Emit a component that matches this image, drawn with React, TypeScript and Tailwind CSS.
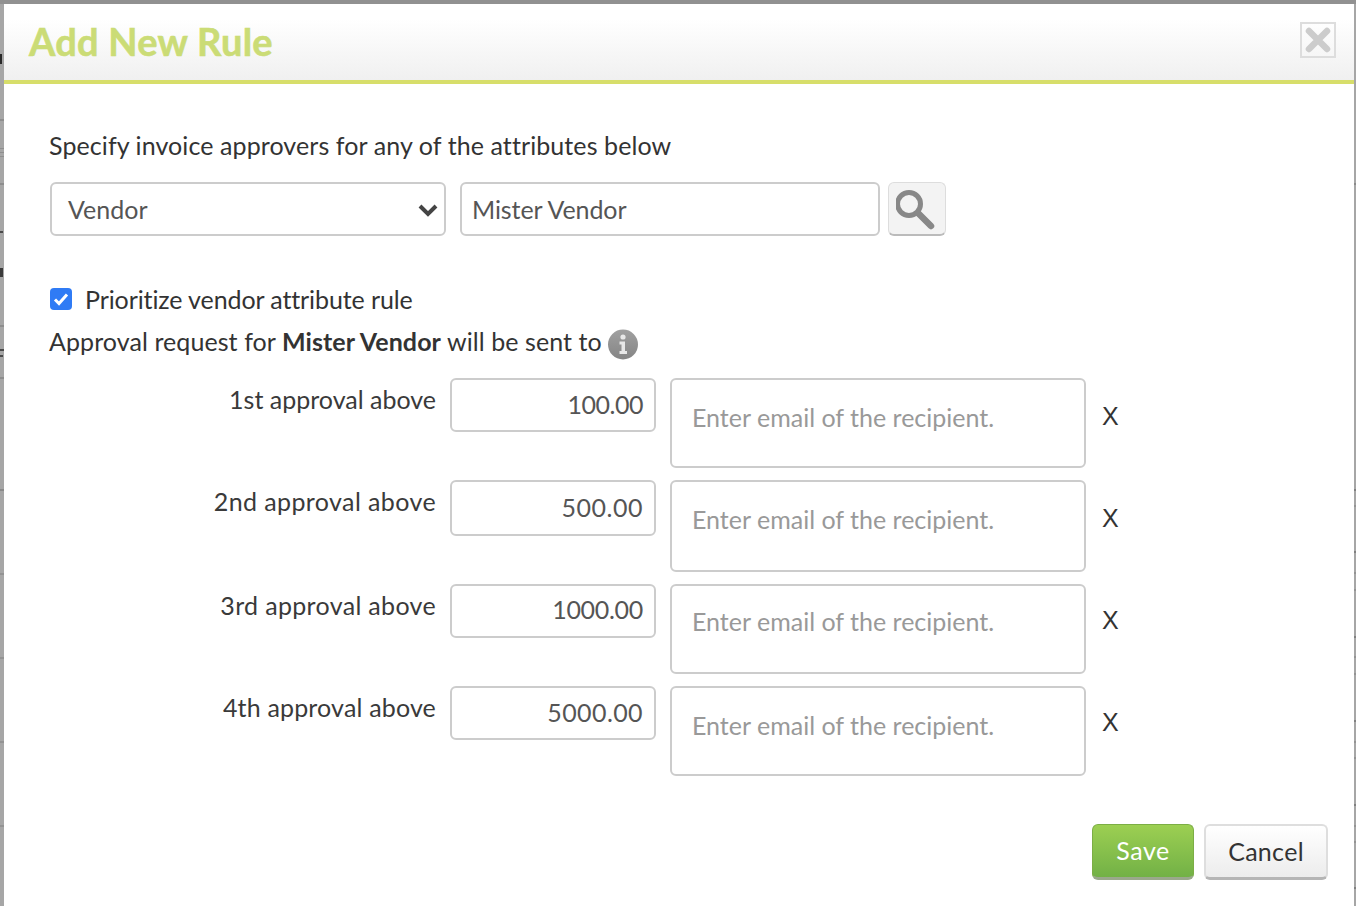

import React from "react";

const font = { fontFamily: '"Lato", "Liberation Sans", sans-serif' };

const rows = [
  { label: "1st approval above", value: "100.00", inputH: "h-[54px]", areaH: "h-[90px]", mb: "mb-[12px]", labelTrack: "tracking-normal", valueTrack: "tracking-[-0.5px]", valuePb: "pb-[1px]", areaPt: "pt-[22px]", xPt: "pt-[23px]" },
  { label: "2nd approval above", value: "500.00", inputH: "h-[56px]", areaH: "h-[92px]", mb: "mb-[12px]", labelTrack: "tracking-[0.4px]", valueTrack: "tracking-[0.5px]", valuePb: "pb-[1px]", areaPt: "pt-[22px]", xPt: "pt-[23px]" },
  { label: "3rd approval above", value: "1000.00", inputH: "h-[54px]", areaH: "h-[90px]", mb: "mb-[12px]", labelTrack: "tracking-[0.33px]", valueTrack: "tracking-[-0.3px]", valuePb: "pb-[3px]", areaPt: "pt-[20px]", xPt: "pt-[21px]" },
  { label: "4th approval above", value: "5000.00", inputH: "h-[54px]", areaH: "h-[90px]", mb: "mb-0", labelTrack: "tracking-[0.17px]", valueTrack: "tracking-[0.4px]", valuePb: "pb-0", areaPt: "pt-[22px]", xPt: "pt-[21px]" },
];

const leftMarks = [
  "top-[115px] h-[2px] w-[4px] bg-[#8e8e8e]",
  "top-[179px] h-[2px] w-[4px] bg-[#8e8e8e]",
  "top-[321px] h-[2px] w-[4px] bg-[#8e8e8e]",
  "top-[373px] h-[2px] w-[4px] bg-[#8e8e8e]",
  "top-[485px] h-[2px] w-[4px] bg-[#8a8a8a]",
  "top-[569px] h-[2px] w-[4px] bg-[#939393]",
  "top-[653px] h-[2px] w-[4px] bg-[#939393]",
  "top-[737px] h-[2px] w-[4px] bg-[#939393]",
  "top-[821px] h-[2px] w-[4px] bg-[#939393]",
  "top-[50px] h-[10px] w-[2px] bg-[#2a2a2a]",
  "top-[144px] h-[1px] w-[4px] bg-[#8f8f8f]",
  "top-[148px] h-[1px] w-[4px] bg-[#8f8f8f]",
  "top-[152px] h-[1px] w-[4px] bg-[#8f8f8f]",
  "top-[227px] h-[2px] w-[3px] bg-[#4a4a4a]",
  "top-[264px] h-[9px] w-[3px] bg-[#3a3a3a]",
  "top-[345px] h-[2px] w-[4px] bg-[#4a4a4a]",
  "top-[351px] h-[2px] w-[3px] bg-[#4a4a4a]",
];

const rightMarks = [
  "top-[179px] bg-[#8a8a8a]",
  "top-[485px] bg-[#808080]",
  "top-[501px] bg-[#939393]",
  "top-[547px] bg-[#808080]",
  "top-[568px] bg-[#939393]",
  "top-[585px] bg-[#939393]",
  "top-[632px] bg-[#808080]",
  "top-[652px] bg-[#939393]",
  "top-[669px] bg-[#939393]",
  "top-[716px] bg-[#808080]",
  "top-[737px] bg-[#939393]",
  "top-[753px] bg-[#939393]",
  "top-[800px] bg-[#808080]",
  "top-[821px] bg-[#939393]",
  "top-[837px] bg-[#939393]",
  "top-[883px] bg-[#808080]",
];

function Row({ r }: { r: (typeof rows)[number] }) {
  return (
    <div className={`flex items-start ${r.mb}`}>
      <div className={`w-[432px] pt-[6px] text-right text-[25px] leading-[30px] text-[#3a3a3a] ${r.labelTrack}`}>{r.label}</div>
      <div className={`ml-[14px] flex w-[206px] ${r.inputH} items-center justify-end rounded-[6px] border-2 border-[#cccccc] bg-white pr-[11px] text-[25px] text-[#555555] ${r.valuePb} ${r.valueTrack}`}>
        {r.value}
      </div>
      <div className={`ml-[14px] w-[416px] ${r.areaH} rounded-[6px] border-2 border-[#cccccc] bg-white pl-[20px] ${r.areaPt} text-[25px] leading-[30px] text-[#999999]`}>
        Enter email of the recipient.
      </div>
      <div className={`ml-[16px] ${r.xPt} text-[25px] leading-[30px] text-[#333333]`} style={{ fontFamily: '"Liberation Sans", sans-serif' }}>X</div>
    </div>
  );
}

export default function App() {
  return (
    <div className="flex h-[906px] w-[1356px] flex-col overflow-hidden bg-[#a3a3a3]" style={font}>
      <div className="h-[4px] shrink-0 bg-[#919191]" />
      <div className="flex min-h-0 flex-1">
        <div className="relative w-[4px] shrink-0 overflow-hidden bg-[#a6a6a6]">
          {leftMarks.map((m) => (
            <div key={m} className={`absolute left-0 ${m}`} />
          ))}
        </div>
        <div className="flex min-w-0 flex-1 flex-col bg-white">
          <div className="flex h-[80px] shrink-0 items-start justify-between border-b-4 border-[#d7de6a] bg-gradient-to-b from-white from-20% to-[#f0f0f0]">
            <div className="ml-[25px] mt-[14px] text-[38px] font-bold leading-[46px] tracking-[0.25px] text-[#cbdc76] [-webkit-text-stroke:0.6px_#cbdc76]">Add New Rule</div>
            <div className="mr-[18px] mt-[18px] flex h-[36px] w-[36px] items-center justify-center border-2 border-[#dddddd]">
              <svg className="blur-[0.5px]" width="28" height="28" viewBox="0 0 28 28">
                <path d="M5 5L23 23M23 5L5 23" stroke="#cccccc" strokeWidth="6.5" strokeLinecap="round" />
              </svg>
            </div>
          </div>

          <div className="flex min-h-0 flex-1 flex-col pl-[45px] pt-[45px]">
            <div className="text-[25px] leading-[32px] tracking-[0.09px] text-[#333333]">Specify invoice approvers for any of the attributes below</div>

            <div className="ml-px mt-[21px] flex items-stretch">
              <div className="flex h-[54px] w-[396px] items-center justify-between rounded-[6px] border-2 border-[#cccccc] bg-white pl-[16px] pr-[5px] pt-[1px] text-[25px] text-[#555555]">
                <span>Vendor</span>
                <svg width="22" height="14" viewBox="0 0 22 14">
                  <path d="M3 3L11 11L19 3" fill="none" stroke="#444444" strokeWidth="4" />
                </svg>
              </div>
              <div className="ml-[14px] flex h-[54px] w-[420px] items-center rounded-[6px] border-2 border-[#cccccc] bg-white pl-[10px] pt-[1px] text-[25px] tracking-[-0.08px] text-[#555555]">
                Mister Vendor
              </div>
              <div className="ml-[8px] flex h-[54px] w-[58px] items-center justify-center rounded-[6px] border border-[#dddddd] border-b-2 border-b-[#bbbbbb] bg-[#f3f3f3]">
                <svg className="blur-[0.4px]" width="42" height="42" viewBox="0 0 42 42">
                  <circle cx="13" cy="16" r="11.5" fill="none" stroke="#888888" strokeWidth="5" />
                  <path d="M22 25L35 38" stroke="#888888" strokeWidth="6.5" strokeLinecap="round" />
                </svg>
              </div>
            </div>

            <div className="ml-px mt-[52px] flex h-[22px] items-center">
              <div className="flex h-[22px] w-[22px] items-center justify-center rounded-[4px] bg-[#2f7bf5]">
                <svg width="16" height="14" viewBox="0 0 16 14">
                  <path d="M2 7.5L6 11.5L14 2.5" fill="none" stroke="white" strokeWidth="3" />
                </svg>
              </div>
              <span className="ml-[13px] text-[25px] leading-[30px] tracking-[-0.1px] text-[#333333]">Prioritize vendor attribute rule</span>
            </div>

            <div className="mt-[16px] flex h-[32px] items-center text-[25px] tracking-[0.08px] text-[#333333]">
              <span>
                Approval request for <b>Mister Vendor</b> will be sent to
              </span>
              <svg className="ml-[6px] mt-[4px]" width="30" height="31" viewBox="0 0 30 31">
                <defs>
                  <linearGradient id="infoFill" x1="0" y1="0" x2="0" y2="1">
                    <stop offset="0" stopColor="#a0a0a0" />
                    <stop offset="1" stopColor="#858585" />
                  </linearGradient>
                </defs>
                <circle cx="15" cy="15.5" r="15" fill="url(#infoFill)" />
                <circle cx="15" cy="8" r="2.6" fill="#e8e8e8" />
                <path d="M11.5 12.5H17V22H19V25H11.5V22H13.5V15.5H11.5Z" fill="#e8e8e8" />
              </svg>
            </div>

            <div className="-ml-[45px] mt-[20px] flex flex-col">
              {rows.map((r) => (
                <Row key={r.label} r={r} />
              ))}
            </div>

            <div className="mt-[48px] flex justify-end gap-[10px] pr-[26px]">
              <div className="flex h-[56px] w-[102px] items-center justify-center rounded-[6px] border border-[#7cae45] border-b-[3px] border-b-[#9aa88c] bg-gradient-to-b from-[#9ccf52] to-[#72b146] text-[25px] tracking-[0.5px] text-white">
                Save
              </div>
              <div className="flex h-[56px] w-[124px] items-center justify-center rounded-[6px] border-2 border-[#dedede] border-b-[3px] border-b-[#b5b5b5] bg-gradient-to-b from-white to-[#ececec] text-[25px] tracking-[0.3px] text-[#333333]">
                Cancel
              </div>
            </div>
          </div>
        </div>
        <div className="relative w-[2px] shrink-0 overflow-hidden bg-[#a6a6a6]">
          {rightMarks.map((m) => (
            <div key={m} className={`absolute left-0 h-[2px] w-[2px] ${m}`} />
          ))}
        </div>
      </div>
    </div>
  );
}
